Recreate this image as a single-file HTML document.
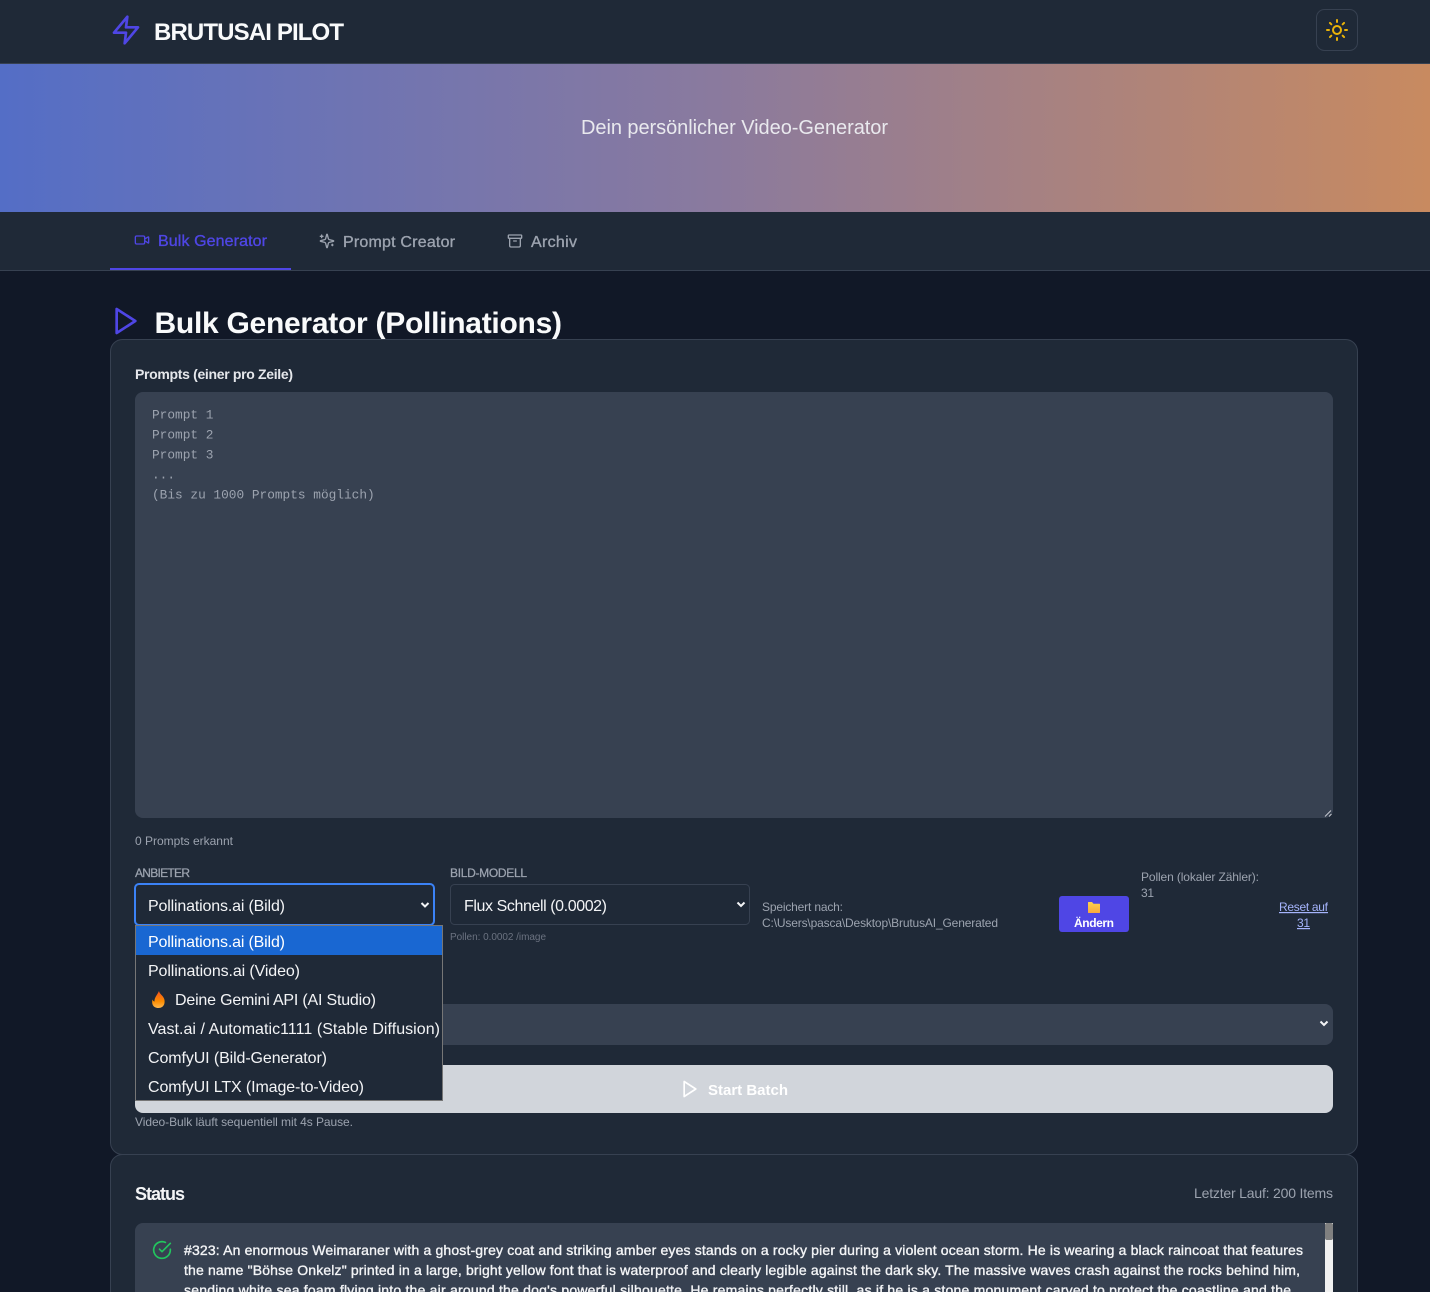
<!DOCTYPE html>
<html lang="de"><head><meta charset="utf-8"><title>BrutusAI Pilot</title>
<style>
html,body{margin:0;padding:0;background:#111827;overflow:hidden}
svg.page{display:block;width:1430px;height:1292px}
text{font-family:"Liberation Sans",sans-serif;white-space:pre}
.mono{font-family:"Liberation Mono",monospace;font-size:12.8px;fill:#9ca3af}
.b{font-weight:700}
.med{stroke-width:.25px}
.sem{stroke-width:.35px}
.ic{fill:none;stroke-linecap:round;stroke-linejoin:round;stroke-width:2}
</style></head><body>
<svg class="page" xmlns="http://www.w3.org/2000/svg" viewBox="0 0 1430 1292">
<defs>
<linearGradient id="hero" x1="0" x2="1" y1="0" y2="0"><stop offset="0" stop-color="#546ec6"/><stop offset=".5" stop-color="#8a7a9e"/><stop offset="1" stop-color="#c88a60"/></linearGradient>
<linearGradient id="fire" x1="0" x2="0" y1="0" y2="1"><stop offset="0" stop-color="#f4511e"/><stop offset=".6" stop-color="#fb8c00"/><stop offset="1" stop-color="#ffb74d"/></linearGradient>
<linearGradient id="fold" x1="0" x2="0" y1="0" y2="1"><stop offset="0" stop-color="#fdd34d"/><stop offset="1" stop-color="#f9a83c"/></linearGradient>
</defs>
<rect width="1430" height="1292" fill="#111827"/>

<!-- header -->
<rect width="1430" height="64" fill="#1f2937"/>
<rect y="63" width="1430" height="1" fill="#374151"/>
<svg x="110" y="14" width="32" height="32" viewBox="0 0 24 24" class="ic" stroke="#4f46e5"><polygon points="13 2 3 14 12 14 11 22 21 10 12 10 13 2"/></svg>
<text x="154" y="40" class="b" font-size="24" fill="#f9fafb" textLength="190">BRUTUSAI PILOT</text>
<rect x="1316.5" y="9.5" width="41" height="41" rx="8" fill="#1f2937" stroke="#374151"/>
<svg x="1325" y="18" width="24" height="24" viewBox="0 0 24 24" class="ic" stroke="#eab308"><circle cx="12" cy="12" r="4"/><path d="M12 2v2M12 20v2M4.93 4.93l1.41 1.41M17.66 17.66l1.41 1.41M2 12h2M20 12h2M6.34 17.66l-1.41 1.41M19.07 4.93l-1.41 1.41"/></svg>

<!-- hero -->
<rect y="64" width="1430" height="148" fill="url(#hero)"/>
<text x="581" y="134" font-size="20" fill="#e9e9ee" textLength="307">Dein persönlicher Video-Generator</text>

<!-- tabs -->
<rect y="212" width="1430" height="58" fill="#1f2937"/>
<rect y="270" width="1430" height="1" fill="#374151"/>
<rect x="110" y="268" width="181" height="2" fill="#4f46e5"/>
<svg x="134" y="232" width="16" height="16" viewBox="0 0 24 24" class="ic" stroke="#4f46e5"><path d="m16 13 5.223 3.482a.5.5 0 0 0 .777-.416V7.87a.5.5 0 0 0-.752-.432L16 10.5"/><rect x="2" y="6" width="14" height="12" rx="2"/></svg>
<text x="158" y="246" font-size="16" fill="#4f46e5" stroke="#4f46e5" class="sem" textLength="109">Bulk Generator</text>
<svg x="319" y="233" width="16" height="16" viewBox="0 0 24 24" class="ic" stroke="#9ca3af"><path d="M9.937 15.5A2 2 0 0 0 8.5 14.063l-6.135-1.582a.5.5 0 0 1 0-.962L8.5 9.936A2 2 0 0 0 9.937 8.5l1.582-6.135a.5.5 0 0 1 .963 0L14.063 8.5A2 2 0 0 0 15.5 9.937l6.135 1.581a.5.5 0 0 1 0 .964L15.5 14.063a2 2 0 0 0-1.437 1.437l-1.582 6.135a.5.5 0 0 1-.963 0z" transform="translate(24 0) scale(-1 1)"/><path d="M4 3v4M6 5H2M20 17v2M21 18h-2"/></svg>
<text x="343" y="247" font-size="16" fill="#9ca3af" stroke="#9ca3af" class="sem" textLength="112">Prompt Creator</text>
<svg x="507" y="233" width="16" height="16" viewBox="0 0 24 24" class="ic" stroke="#9ca3af"><rect x="2" y="3" width="20" height="5" rx="1"/><path d="M4 8v11a2 2 0 0 0 2 2h12a2 2 0 0 0 2-2V8M10 12h4"/></svg>
<text x="531" y="247" font-size="16" fill="#9ca3af" stroke="#9ca3af" class="sem" textLength="46">Archiv</text>

<!-- title -->
<svg x="110" y="305" width="32" height="32" viewBox="0 0 24 24" class="ic" stroke="#4f46e5"><polygon points="5 3 19 12 5 21 5 3"/></svg>
<text x="154.500" y="333" class="b" font-size="30" fill="#f9fafb" textLength="407.500">Bulk Generator (Pollinations)</text>

<!-- main panel -->
<rect x="110.5" y="339.5" width="1247" height="815" rx="12" fill="#1f2937" stroke="#374151"/>
<text x="135" y="379" class="b" font-size="14" fill="#e5e7eb" textLength="158">Prompts (einer pro Zeile)</text>
<rect x="135" y="392" width="1198" height="426" rx="8" fill="#374151"/>
<text x="152" y="418.500" class="mono">Prompt 1</text>
<text x="152" y="438.500" class="mono">Prompt 2</text>
<text x="152" y="458.500" class="mono">Prompt 3</text>
<text x="152" y="478.500" class="mono">...</text>
<text x="152" y="498.500" class="mono">(Bis zu 1000 Prompts möglich)</text>
<path d="M1325 816.5l6-6M1329 816.5l2.500-2.500" stroke="#c5c8cf" stroke-width="1" fill="none"/>
<text x="135" y="845" font-size="12" fill="#9ca3af" textLength="98">0 Prompts erkannt</text>

<text x="135" y="877" font-size="12" fill="#9ca3af" stroke="#9ca3af" class="med" textLength="55">ANBIETER</text>
<text x="450" y="877" font-size="12" fill="#9ca3af" stroke="#9ca3af" class="med" textLength="77">BILD-MODELL</text>

<!-- model select -->
<rect x="450.500" y="884.500" width="299" height="40" rx="4" fill="#1f2937" stroke="#374151"/>
<text x="464" y="911" font-size="16" fill="#f3f4f6" textLength="143">Flux Schnell (0.0002)</text>
<path d="M737.500 902.500l3.500 3.500 3.500-3.500" fill="none" stroke="#f3f4f6" stroke-width="2"/>
<text x="450" y="940" font-size="10" fill="#6b7280" textLength="96">Pollen: 0.0002 /image</text>

<text x="762" y="911" font-size="12" fill="#9ca3af" textLength="81">Speichert nach:</text>
<text x="762" y="927" font-size="12" fill="#9ca3af" textLength="236">C:\Users\pasca\Desktop\BrutusAI_Generated</text>

<rect x="1059" y="896" width="70" height="36" rx="3" fill="#4f46e5"/>
<path d="M1088 902.500a.5.5 0 0 1 .5-.5h3.500l1.500 1.800h6a.5.5 0 0 1 .5.5v8.200a.5.5 0 0 1-.5.5h-11a.5.5 0 0 1-.5-.5z" fill="url(#fold)"/>
<text x="1074" y="927" class="b" font-size="12" fill="#fff" textLength="40">Ändern</text>

<text x="1141" y="881" font-size="12" fill="#9ca3af" textLength="118">Pollen (lokaler Zähler):</text>
<text x="1141" y="897" font-size="12" fill="#9ca3af" textLength="13">31</text>
<text x="1279" y="911" font-size="12" fill="#a5b4fc" text-decoration="underline" textLength="49">Reset auf</text>
<text x="1297" y="927" font-size="12" fill="#a5b4fc" text-decoration="underline" textLength="13">31</text>

<!-- second select + button -->
<rect x="135" y="1004" width="1198" height="41" rx="8" fill="#374151"/>
<path d="M1320.500 1021.500l3.500 3.500 3.500-3.500" fill="none" stroke="#f3f4f6" stroke-width="2"/>
<rect x="135" y="1065" width="1198" height="48" rx="8" fill="#d1d5db"/>
<svg x="680" y="1079" width="20" height="20" viewBox="0 0 24 24" class="ic" stroke="#fff"><polygon points="5 3 19 12 5 21 5 3"/></svg>
<text x="708" y="1095" class="b" font-size="15" fill="#fff" textLength="80">Start Batch</text>
<text x="135" y="1126" font-size="12" fill="#9ca3af" textLength="218">Video-Bulk läuft sequentiell mit 4s Pause.</text>

<!-- provider select (focused) -->
<rect x="135" y="884" width="299" height="41" rx="4" fill="#1f2937" stroke="#3b82f6" stroke-width="2"/>
<text x="148" y="911" font-size="16" fill="#f3f4f6" textLength="137">Pollinations.ai (Bild)</text>
<path d="M421.500 903l3.500 3.500 3.500-3.500" fill="none" stroke="#f3f4f6" stroke-width="2"/>

<!-- dropdown -->
<rect x="135.500" y="925.500" width="307" height="175" fill="#1f2937" stroke="#767676"/>
<rect x="136" y="926" width="306" height="29" fill="#1967d2"/>
<text x="148" y="947" font-size="16" fill="#fff" textLength="137">Pollinations.ai (Bild)</text>
<text x="148" y="976" font-size="16" fill="#f3f4f6" textLength="152">Pollinations.ai (Video)</text>
<path d="M159 991c.5 3 3.500 4 5 7.500 1.500 3.500.5 9.500-5.500 9.500s-7-5-6-8.500c.4 1.200 1 1.800 2 2-.3-4 2.800-6.500 4.500-10.500z" fill="url(#fire)"/>
<text x="175" y="1005" font-size="16" fill="#f3f4f6" textLength="201">Deine Gemini API (AI Studio)</text>
<text x="148" y="1034" font-size="16" fill="#f3f4f6" textLength="292">Vast.ai / Automatic1111 (Stable Diffusion)</text>
<text x="148" y="1063" font-size="16" fill="#f3f4f6" textLength="179">ComfyUI (Bild-Generator)</text>
<text x="148" y="1092" font-size="16" fill="#f3f4f6" textLength="216">ComfyUI LTX (Image-to-Video)</text>

<!-- status panel -->
<rect x="110.500" y="1154.500" width="1247" height="160" rx="12" fill="#1f2937" stroke="#374151"/>
<text x="135" y="1200" class="b" font-size="18" fill="#f3f4f6" textLength="50">Status</text>
<text x="1194" y="1198" font-size="14" fill="#9ca3af" textLength="139">Letzter Lauf: 200 Items</text>
<rect x="135" y="1223" width="1198" height="90" rx="8" fill="#374151"/>
<rect x="1325" y="1223" width="8" height="69" fill="#f1f1f1"/>
<rect x="1325" y="1223" width="8" height="17" rx="2" fill="#808080"/>
<svg x="152" y="1240" width="20" height="20" viewBox="0 0 24 24" class="ic" stroke="#22c55e"><path d="M22 11.080V12a10 10 0 1 1-5.930-9.140"/><path d="M22 4 12 14.010l-3-3"/></svg>
<g font-size="14" fill="#f3f4f6" stroke="#f3f4f6" class="sem">
<text x="184" y="1255" textLength="1119">#323: An enormous Weimaraner with a ghost-grey coat and striking amber eyes stands on a rocky pier during a violent ocean storm. He is wearing a black raincoat that features</text>
<text x="184" y="1275" textLength="1116">the name "Böhse Onkelz" printed in a large, bright yellow font that is waterproof and clearly legible against the dark sky. The massive waves crash against the rocks behind him,</text>
<text x="184" y="1295" textLength="1107">sending white sea foam flying into the air around the dog's powerful silhouette. He remains perfectly still, as if he is a stone monument carved to protect the coastline and the</text>
</g>
</svg>
</body></html>
